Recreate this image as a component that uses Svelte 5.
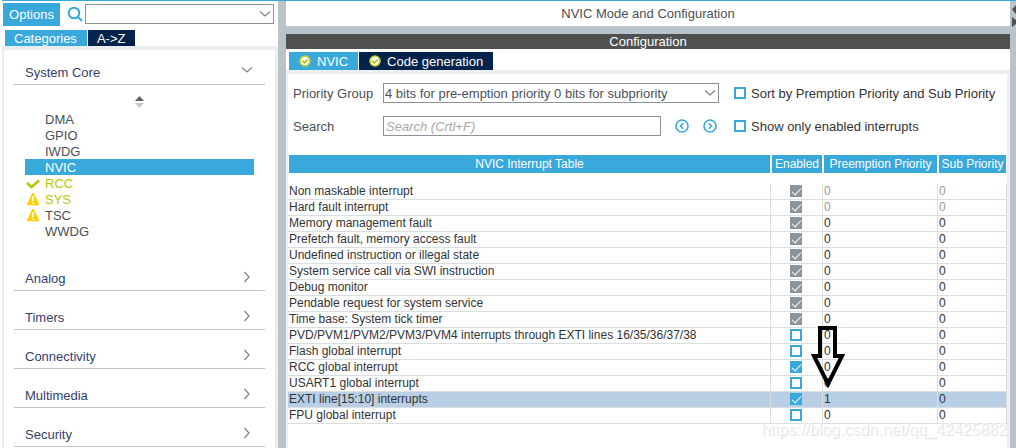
<script>
	let peripherals = [
		{ name: 'DMA', status: '' },
		{ name: 'GPIO', status: '' },
		{ name: 'IWDG', status: '' },
		{ name: 'NVIC', status: '' },
		{ name: 'RCC', status: 'ok' },
		{ name: 'SYS', status: 'warn', configured: true },
		{ name: 'TSC', status: 'warn' },
		{ name: 'WWDG', status: '' }
	];

	let categories = ['Analog', 'Timers', 'Connectivity', 'Multimedia', 'Security'];

	let interrupts = [
		{ name: 'Non maskable interrupt', enabled: true, locked: true, fixed: true, preemption: 0, sub: 0 },
		{ name: 'Hard fault interrupt', enabled: true, locked: true, fixed: true, preemption: 0, sub: 0 },
		{ name: 'Memory management fault', enabled: true, locked: true, preemption: 0, sub: 0 },
		{ name: 'Prefetch fault, memory access fault', enabled: true, locked: true, preemption: 0, sub: 0 },
		{ name: 'Undefined instruction or illegal state', enabled: true, locked: true, preemption: 0, sub: 0 },
		{ name: 'System service call via SWI instruction', enabled: true, locked: true, preemption: 0, sub: 0 },
		{ name: 'Debug monitor', enabled: true, locked: true, preemption: 0, sub: 0 },
		{ name: 'Pendable request for system service', enabled: true, locked: true, preemption: 0, sub: 0 },
		{ name: 'Time base: System tick timer', enabled: true, locked: true, preemption: 0, sub: 0 },
		{
			name: 'PVD/PVM1/PVM2/PVM3/PVM4 interrupts through EXTI lines 16/35/36/37/38',
			enabled: false,
			preemption: 0,
			sub: 0,
			marker: true
		},
		{ name: 'Flash global interrupt', enabled: false, preemption: 0, sub: 0 },
		{ name: 'RCC global interrupt', enabled: true, preemption: 0, sub: 0 },
		{ name: 'USART1 global interrupt', enabled: false, preemption: 0, sub: 0 },
		{ name: 'EXTI line[15:10] interrupts', enabled: true, preemption: 1, sub: 0 },
		{ name: 'FPU global interrupt', enabled: false, preemption: 0, sub: 0 }
	];

	let selectedPeripheral = 'NVIC';
	let selectedInterrupt = 'EXTI line[15:10] interrupts';
	let sortByPriority = false;
	let onlyEnabled = false;
	let search = '';

	$: rows = interrupts.filter(
		(row) => (!onlyEnabled || row.enabled) && row.name.toLowerCase().includes(search.toLowerCase())
	);
	$: visible = sortByPriority
		? [...rows].sort((a, b) => a.preemption - b.preemption || a.sub - b.sub)
		: rows;
</script>

<div class="app">
	<aside>
		<div class="toolbar">
			<button class="options">Options</button>
			<svg class="magnifier" width="16" height="16" viewBox="0 0 16 16">
				<circle cx="7" cy="7" r="5.3" />
				<path d="M10.5 10.5L15 15" />
			</svg>
			<div class="combo">
				<select aria-label="Find peripheral"><option></option></select>
				<svg class="chevron" width="12" height="8" viewBox="0 0 12 8"><path d="M1 1.5L6 6L11 1.5" /></svg>
			</div>
		</div>
		<div class="tabs">
			<button class="tab active">Categories</button>
			<button class="tab">A-&gt;Z</button>
		</div>
		<div class="tree">
			<button class="category first">
				System Core
				<svg class="chevron" width="12" height="8" viewBox="0 0 12 8"><path d="M1 1.5L6 6L11 1.5" /></svg>
			</button>
			<div class="sorter">
				<svg width="9" height="12" viewBox="0 0 9 12">
					<path d="M0 5L4.5 0L9 5z" fill="#606060" />
					<path d="M0 7L4.5 12L9 7z" fill="#c8c8c8" />
				</svg>
			</div>
			<ul>
				{#each peripherals as item}
					<li>
						<button
							class="peripheral"
							class:selected={item.name === selectedPeripheral}
							class:configured={item.status === 'ok' || item.configured}
							on:click={() => (selectedPeripheral = item.name)}
						>
							<svg width="16" height="16" viewBox="0 0 16 16">
								{#if item.status === 'ok'}
									<path d="M2 8L6.5 12L14 5.5" fill="none" stroke="#b5c800" stroke-width="2.6" />
								{:else if item.status === 'warn'}
									<path d="M8 3L13 13.2H3z" fill="#fdd000" stroke="#fdd000" stroke-width="2" stroke-linejoin="round" />
									<path d="M8 5V10M8 11.2V13" stroke="#fff" stroke-width="1.8" />
								{/if}
							</svg>
							{item.name}
						</button>
					</li>
				{/each}
			</ul>
			{#each categories as category}
				<button class="category">
					{category}
					<svg class="chevron" width="8" height="12" viewBox="0 0 8 12"><path d="M1.5 1L6 6L1.5 11" /></svg>
				</button>
			{/each}
		</div>
	</aside>

	<main>
		<h1>NVIC Mode and Configuration</h1>
		<section>
			<h2>Configuration</h2>
			<div class="tabs">
				{#each ['NVIC', 'Code generation'] as tab, i}
					<button class="tab" class:active={i === 0}>
						<svg width="12" height="12" viewBox="0 0 12 12">
							<circle cx="6" cy="6" r="5" fill="#fff" stroke="#c3cf21" stroke-width="1.6" />
							<path d="M3.2 5.8L5.4 8L8.8 4.4" fill="none" stroke="#a9b800" stroke-width="1.5" />
						</svg>
						{tab}
					</button>
				{/each}
			</div>
			<div class="panel">
				<div class="filters">
					<label for="group">Priority Group</label>
					<div class="combo">
						<select id="group">
							<option>4 bits for pre-emption priority 0 bits for subpriority</option>
						</select>
						<svg class="chevron" width="12" height="8" viewBox="0 0 12 8"><path d="M1 1.5L6 6L11 1.5" /></svg>
					</div>
					<label class="check">
						<input type="checkbox" bind:checked={sortByPriority} />
						Sort by Premption Priority and Sub Priority
					</label>

					<label for="search">Search</label>
					<div class="search">
						<input id="search" type="text" placeholder="Search (Crtl+F)" bind:value={search} />
						<button class="step" aria-label="Previous match">
							<svg width="14" height="14" viewBox="0 0 14 14">
								<circle cx="7" cy="7" r="6" /><path d="M8.3 4.2L5.5 7L8.3 9.8" />
							</svg>
						</button>
						<button class="step" aria-label="Next match">
							<svg width="14" height="14" viewBox="0 0 14 14">
								<circle cx="7" cy="7" r="6" /><path d="M5.7 4.2L8.5 7L5.7 9.8" />
							</svg>
						</button>
					</div>
					<label class="check">
						<input type="checkbox" bind:checked={onlyEnabled} />
						Show only enabled interrupts
					</label>
				</div>

				<table>
					<thead>
						<tr>
							<th>NVIC Interrupt Table</th>
							<th class="enabled">Enabled</th>
							<th class="preemption">Preemption Priority</th>
							<th class="sub">Sub Priority</th>
						</tr>
					</thead>
					<tbody>
						{#each visible as row}
							<tr
								class:selected={row.name === selectedInterrupt}
								class:fixed={row.fixed}
								on:click={() => (selectedInterrupt = row.name)}
							>
								<td>{row.name}</td>
								<td class="enabled">
									<input
										type="checkbox"
										aria-label={row.name}
										bind:checked={row.enabled}
										disabled={row.locked}
									/>
								</td>
								<td class="value">
									{row.preemption}
									{#if row.marker}
										<svg class="marker" width="34" height="62" viewBox="0 0 34 62">
											<path d="M9 2H24V30H31L17 58L3 30H9z" />
										</svg>
									{/if}
								</td>
								<td class="value">{row.sub}</td>
							</tr>
						{/each}
					</tbody>
				</table>
			</div>
		</section>
		<div class="watermark">https://blog.csdn.net/qq_42425882</div>
	</main>

	<div class="edge">
		<svg width="4" height="22" viewBox="0 0 4 22">
			<path d="M4 0V9L0 4.5zM0 12L4 15V19L0 22z" fill="#4f5150" />
		</svg>
	</div>
</div>

<style>
	:global(body) {
		background: #fff;
		color: #4b4f54;
		font-family: 'Liberation Sans', Arial, sans-serif;
		font-size: 13px;
	}

	* {
		box-sizing: border-box;
	}

	button,
	input,
	select {
		margin: 0;
		font: inherit;
	}

	button {
		padding: 0;
		border: 0;
		background: none;
		cursor: pointer;
	}

	.app {
		display: flex;
		min-height: 100vh;
		margin-left: 2px;
		border-top: 1px solid #39a9dc;
	}

	aside {
		display: flex;
		flex-direction: column;
		flex: 0 0 276px;
	}

	.toolbar {
		display: flex;
		align-items: center;
		height: 24px;
		margin: 1px 4px 4px 1px;
	}

	.options {
		width: 57px;
		height: 23px;
		background: #39a9dc;
		color: #fff;
	}

	.magnifier {
		margin: 0 2px 0 7px;
		fill: none;
		stroke: #39a9dc;
		stroke-width: 2;
	}

	.combo {
		position: relative;
		flex: 1;
	}

	.combo select {
		display: block;
		width: 100%;
		height: 20px;
		padding: 0 1px;
		border: 1px solid #8c9299;
		border-radius: 0;
		background: #fff;
		color: #4b4f54;
		appearance: none;
	}

	.combo .chevron {
		position: absolute;
		top: 6px;
		right: 3px;
		pointer-events: none;
	}

	.chevron {
		fill: none;
		stroke: #7c8084;
		stroke-width: 1.2;
	}

	.tabs {
		display: flex;
		gap: 1px;
		padding-left: 3px;
	}

	.tab {
		display: flex;
		align-items: center;
		gap: 6px;
		height: 18px;
		padding: 0 10px;
		background: #03234b;
		color: #fff;
	}

	.tab.active {
		background: #39a9dc;
	}

	aside .tab {
		height: 16px;
		padding-left: 9px;
	}

	.tree {
		flex: 1;
		padding: 0 10px;
		border: solid #e9eef2;
		border-width: 4px 3px 0 2px;
	}

	.category {
		display: flex;
		align-items: flex-end;
		justify-content: space-between;
		width: 100%;
		height: 39px;
		padding: 0 12px 4px 11px;
		border-bottom: 1px solid #b8c4ca;
		color: #34406c;
	}

	.category.first {
		height: 35px;
	}

	.category .chevron {
		margin: 0 2px 3px;
	}

	.category.first .chevron {
		margin: 0 0 6px;
	}

	.sorter {
		height: 26px;
		padding-top: 11px;
		text-align: center;
		line-height: 12px;
	}

	ul {
		margin: 0 11px 13px;
		padding: 0;
		list-style: none;
	}

	.peripheral {
		display: flex;
		align-items: center;
		gap: 4px;
		width: 100%;
		height: 16px;
		color: #4b4f54;
	}

	.peripheral.configured {
		color: #b5c800;
	}

	.peripheral.selected {
		background: #39a9dc;
		color: #fff;
	}

	main {
		position: relative;
		display: flex;
		flex: 1;
		flex-direction: column;
		gap: 8px;
		min-width: 0;
		border-left: 8px solid #b8c4ca;
		background: #b8c4ca;
	}

	h1,
	h2 {
		margin: 0;
		font-size: 13px;
		font-weight: normal;
		text-align: center;
	}

	h1 {
		background: #fff;
		line-height: 25px;
	}

	h2 {
		margin-bottom: 3px;
		background: #4f5150;
		color: #fff;
		line-height: 15px;
	}

	section {
		display: flex;
		flex: 1;
		flex-direction: column;
		background: #fff;
	}

	.panel {
		flex: 1;
		border: solid #ebeff2;
		border-width: 4px 3px 0 2px;
	}

	.filters {
		display: grid;
		grid-template-columns: 90px minmax(0, 336px) auto;
		grid-auto-rows: 20px;
		align-items: center;
		justify-content: start;
		row-gap: 13px;
		padding: 9px 0 19px 5px;
	}

	.search {
		display: flex;
		gap: 14px;
		padding-right: 2px;
	}

	.search input {
		flex: 1;
		min-width: 0;
		height: 20px;
		padding: 0 2px;
		border: 1px solid #8c9299;
		color: #4b4f54;
	}

	.search input::placeholder {
		color: #a8a8a8;
		font-style: italic;
	}

	.step {
		display: flex;
		align-items: center;
	}

	.step svg {
		fill: none;
		stroke: #39a9dc;
		stroke-width: 1.6;
	}

	.check {
		display: flex;
		align-items: center;
		gap: 5px;
		padding-left: 15px;
		color: #333;
		white-space: nowrap;
	}

	input[type='checkbox'] {
		display: grid;
		place-items: center;
		flex: none;
		width: 12px;
		height: 12px;
		border: 2px solid #39a9dc;
		background: #fff;
		appearance: none;
	}

	input[type='checkbox']:checked {
		background: #39a9dc;
	}

	input[type='checkbox']:disabled {
		border-color: #8c9499;
		background: #8c9499;
	}

	input[type='checkbox']:checked::after {
		width: 4px;
		height: 8px;
		margin-top: -2px;
		border: solid #fff;
		border-width: 0 1px 1px 0;
		content: '';
		transform: rotate(42deg);
	}

	table {
		width: 100%;
		border-spacing: 0;
		table-layout: fixed;
		color: #333;
		font-size: 12px;
	}

	th {
		height: 29px;
		padding: 0;
		border: solid #fff;
		border-width: 0 1px 11px;
		background: #39a9dc;
		color: #fff;
		font-weight: normal;
		white-space: nowrap;
	}

	th.enabled {
		width: 52px;
	}

	th.preemption {
		width: 115px;
	}

	th.sub {
		width: 69px;
	}

	td {
		height: 16px;
		padding: 0 1px;
		border: solid #d9dee0;
		border-width: 0 1px 1px 0;
		line-height: 15px;
		white-space: nowrap;
	}

	td.enabled {
		padding: 0 2px 1px 1px;
	}

	td input[type='checkbox'] {
		margin: 0 auto;
	}

	.value {
		position: relative;
	}

	.fixed .value {
		color: #999;
	}

	tr.selected td {
		background: #b8cfe5;
	}

	.marker {
		position: absolute;
		z-index: 1;
		top: -2px;
		left: -12px;
		fill: none;
		stroke: #000;
		stroke-width: 4;
	}

	.watermark {
		position: absolute;
		right: 3px;
		bottom: 8px;
		color: rgba(255, 255, 255, 0.7);
		font-size: 16px;
		line-height: 20px;
		text-shadow: 1px 1px 1px rgba(0, 0, 0, 0.14);
		pointer-events: none;
	}

	.edge {
		flex: 0 0 6px;
		padding: 4px 0 0 2px;
		background: #b8c4ca;
		line-height: 0;
	}
</style>
